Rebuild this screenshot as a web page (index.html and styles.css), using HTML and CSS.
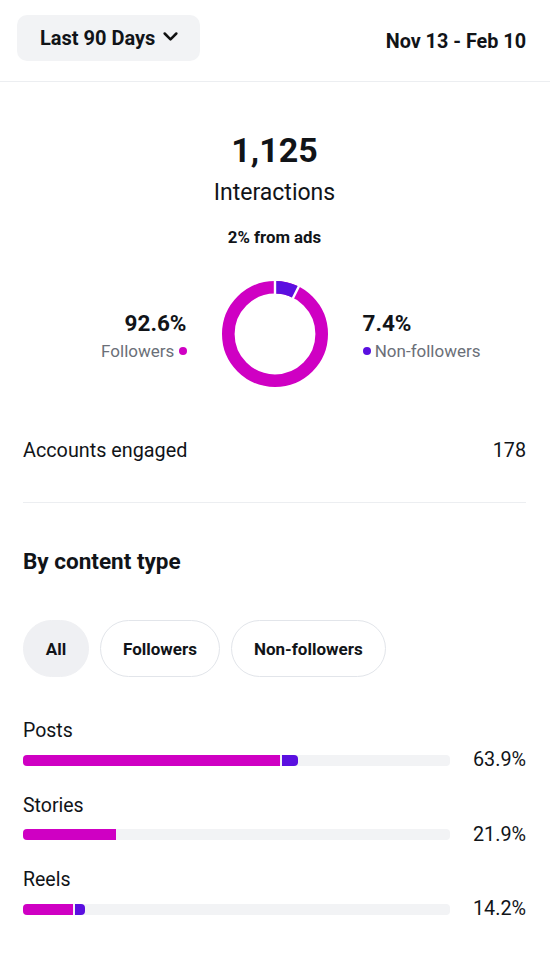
FILE: index.html
```html
<!DOCTYPE html>
<html>
<head>
<meta charset="utf-8">
<link rel="stylesheet" href="styles.css">
</head>
<body>
<header class="top">
  <button class="range">Last 90 Days
    <svg class="chev" width="17" height="17" viewBox="0 0 16 16"><path d="M2.5 5.2 L8 10.7 L13.5 5.2" fill="none" stroke="#111" stroke-width="2.4" stroke-linecap="round" stroke-linejoin="round"/></svg>
  </button>
  <div class="dates">Nov 13 - Feb 10</div>
</header>
<main class="content">
  <section class="summary">
    <div class="total">1,125</div>
    <div class="total-label">Interactions</div>
    <div class="ads">2% from ads</div>
    <div class="donut-row">
      <div class="legend left">
        <div class="pct">92.6%</div>
        <div class="lab">Followers <span class="dot mag"></span></div>
      </div>
      <svg class="donut" width="106" height="106" viewBox="0 0 106 106">
        <circle cx="53" cy="53" r="46.7" fill="none" stroke="#cf00c3" stroke-width="12.6"/>
        <circle cx="53" cy="53" r="46.7" fill="none" stroke="#5a0fe0" stroke-width="12.6" stroke-dasharray="21.7 300" transform="rotate(-90 53 53)"/>
        <line x1="53" y1="0" x2="53" y2="14" stroke="#fff" stroke-width="2.4"/>
        <line x1="53" y1="53" x2="80.3" y2="-1.5" stroke="#fff" stroke-width="2.4"/>
      </svg>
      <div class="legend right">
        <div class="pct">7.4%</div>
        <div class="lab"><span class="dot pur"></span> Non-followers</div>
      </div>
    </div>
  </section>
  <div class="row-engaged">
    <span>Accounts engaged</span>
    <span>178</span>
  </div>
  <h2 class="section-title">By content type</h2>
  <div class="chips">
    <span class="chip active">All</span>
    <span class="chip">Followers</span>
    <span class="chip">Non-followers</span>
  </div>
  <div class="types">
    <div class="type">
      <div class="type-name">Posts</div>
      <div class="bar-row">
        <div class="track"><span class="seg mag" style="width:257px"></span><span class="seg pur end" style="width:16px"></span></div>
        <span class="val">63.9%</span>
      </div>
    </div>
    <div class="type">
      <div class="type-name">Stories</div>
      <div class="bar-row">
        <div class="track"><span class="seg mag" style="width:93px"></span></div>
        <span class="val">21.9%</span>
      </div>
    </div>
    <div class="type">
      <div class="type-name">Reels</div>
      <div class="bar-row">
        <div class="track"><span class="seg mag" style="width:50px"></span><span class="seg pur end" style="width:10px"></span></div>
        <span class="val">14.2%</span>
      </div>
    </div>
  </div>
</main>
</body>
</html>
```
FILE: styles.css
```css
* { box-sizing: border-box; }
body {
  margin: 0;
  font-family: Roboto, "Liberation Sans", Arial, sans-serif;
  color: #111418;
  background: #fff;
  width: 550px;
}
.top {
  display: flex;
  justify-content: space-between;
  align-items: center;
  padding: 15px 24px 20px 17px;
  border-bottom: 1px solid #eceef1;
}
.range {
  display: flex;
  align-items: center;
  gap: 7px;
  height: 46px;
  width: 183px;
  padding: 0 0 0 23px;
  border: none;
  border-radius: 10px;
  background: #f2f3f5;
  font-family: inherit;
  font-size: 20px;
  font-weight: 700;
  color: #111418;
}
.chev { margin-top: -3px; }
.dates {
  font-size: 19.8px;
  font-weight: 700;
  margin-top: 6px;
}
.content { padding: 0 24px 0 23px; }
.summary {
  display: flex;
  flex-direction: column;
  align-items: center;
  padding-top: 48px;
}
.total {
  font-size: 34px;
  font-weight: 700;
  line-height: 40px;
}
.total-label {
  font-size: 23px;
  line-height: 28px;
  margin-top: 9px;
}
.ads {
  font-size: 16.8px;
  font-weight: 700;
  margin-top: 20px;
  line-height: 20px;
}
.donut-row {
  display: grid;
  grid-template-columns: 1fr 106px 1fr;
  align-items: center;
  width: 100%;
  margin-top: 34px;
  column-gap: 35px;
}
.donut { display: block; }
.legend { margin-top: 3px; }
.legend .pct {
  font-size: 22.5px;
  font-weight: 700;
  line-height: 26px;
}
.legend .lab {
  font-size: 17px;
  color: #6b6f78;
  line-height: 22px;
  margin-top: 4px;
  white-space: nowrap;
}
.legend.left { text-align: right; }
.legend.right { text-align: left; }
.dot {
  display: inline-block;
  width: 8px;
  height: 8px;
  border-radius: 50%;
  vertical-align: 2px;
}
.dot.mag, .seg.mag { background: #cf00c3; }
.dot.pur, .seg.pur { background: #5a0fe0; }
.row-engaged {
  display: flex;
  justify-content: space-between;
  font-size: 19.8px;
  line-height: 26px;
  margin-top: 51px;
  padding-bottom: 38px;
  border-bottom: 1px solid #eceef1;
}
.section-title {
  margin: 44px 0 0;
  font-size: 22.5px;
  font-weight: 700;
  line-height: 28px;
}
.chips {
  display: flex;
  gap: 11px;
  margin-top: 45px;
}
.chip {
  display: flex;
  align-items: center;
  justify-content: center;
  height: 57px;
  padding: 0 22px;
  border-radius: 29px;
  border: 1px solid #e2e5ea;
  font-size: 17px;
  font-weight: 700;
}
.chip.active {
  background: #eff0f3;
  border-color: #eff0f3;
  width: 66px;
  padding: 0;
}
.types { margin-top: 41px; }
.type { margin-bottom: 20.5px; }
.type-name {
  font-size: 19.5px;
  line-height: 26px;
}
.bar-row {
  display: flex;
  align-items: center;
  justify-content: space-between;
  margin-top: 4px;
}
.track {
  display: flex;
  gap: 2px;
  width: 427px;
  height: 11px;
  border-radius: 4px;
  background: #f2f3f5;
  overflow: hidden;
}
.seg { display: block; height: 100%; }
.seg.end { border-radius: 0 4px 4px 0; }
.val {
  font-size: 19.8px;
  line-height: 24px;
}
```
